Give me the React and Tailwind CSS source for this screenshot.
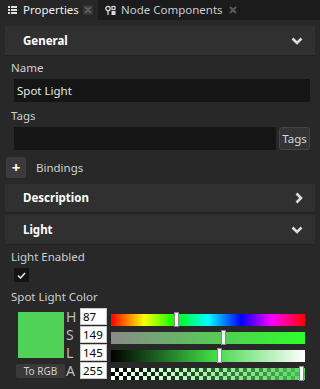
import React from 'react';

const font = { fontFamily: '"Noto Sans", "Open Sans", sans-serif' };

const ChevronDown = () => (
  <svg width="12" height="8" viewBox="0 0 12 8" className="text-[#dcdcdc]">
    <polyline points="1.5,1.5 6,6 10.5,1.5" fill="none" stroke="currentColor" strokeWidth="2.6" />
  </svg>
);

const ChevronRight = () => (
  <svg width="8" height="12" viewBox="0 0 8 12" className="text-[#dcdcdc]">
    <polyline points="1.5,1.5 6,6 1.5,10.5" fill="none" stroke="currentColor" strokeWidth="2.6" />
  </svg>
);

const Close = ({ boxed }) => (
  <span className={`flex items-center justify-center w-[10px] h-[10px] ${boxed ? 'bg-[#353535]' : ''}`}>
    <svg width="8" height="8" viewBox="0 0 8 8">
      <path d="M1 1 L7 7 M7 1 L1 7" stroke="#5c5c5c" strokeWidth="2" />
    </svg>
  </span>
);

const ListIcon = () => (
  <svg width="9" height="8" viewBox="0 0 9 8" fill="#e0e0e0">
    <rect x="0" y="0" width="2" height="2" />
    <rect x="3" y="0" width="6" height="2" />
    <rect x="0" y="3" width="2" height="2" />
    <rect x="3" y="3" width="6" height="2" />
    <rect x="0" y="6" width="2" height="2" />
    <rect x="3" y="6" width="6" height="2" />
  </svg>
);

const NodeIcon = () => (
  <svg width="11" height="11" viewBox="0 0 11 11" fill="none" stroke="#d8d8d8">
    <circle cx="3" cy="3.5" r="2.2" strokeWidth="1.3" />
    <line x1="3" y1="6" x2="3" y2="10" strokeWidth="1.3" />
    <rect x="7" y="1.5" width="3" height="3" strokeWidth="1.2" />
    <rect x="7" y="6.5" width="3" height="3" fill="#d8d8d8" strokeWidth="1" />
  </svg>
);

const Section = ({ title, open, className = '' }) => (
  <div className={`flex items-center justify-between bg-[#303030] border-b border-[#232323] pl-[18px] pr-[12px] ${className}`}>
    <span className="text-[11.5px] font-bold text-white">{title}</span>
    {open ? <ChevronDown /> : <ChevronRight />}
  </div>
);

const Label = ({ children, className = '' }) => (
  <div className={`pl-[6px] text-[11.5px] leading-[16px] text-[#cfcfcf] ${className}`}>{children}</div>
);

const rows = [
  { key: 'H', value: '87', handle: 63, bar: 'bg-[linear-gradient(to_right,#ff0000,#ffff00_17%,#00ff00_33%,#00ffff_50%,#0000ff_67%,#ff00ff_83%,#ff0000)]' },
  { key: 'S', value: '149', handle: 110, bar: 'bg-[linear-gradient(to_right,#8a8a8a,#2bff2b)]' },
  { key: 'L', value: '145', handle: 106, bar: 'bg-[linear-gradient(to_right,#000000,#3fd846_52%,#ffffff)]' },
  { key: 'A', value: '255', handle: 188, bar: 'checker' },
];

const Slider = ({ bar, handle }) => (
  <div className="relative mt-[6px] ml-[4px] w-[194px] h-[12px]">
    {bar === 'checker' ? (
      <div className="absolute inset-0 bg-[repeating-conic-gradient(#000_0_25%,#fff_0_50%)] bg-[length:8px_8px]">
        <div className="absolute inset-0 bg-[linear-gradient(to_right,rgba(79,209,88,0),rgba(79,209,88,0.92))]" />
      </div>
    ) : (
      <div className={`absolute inset-0 ${bar}`} />
    )}
    <div className="absolute top-[-2px] w-[5px] h-[15px] bg-white border border-[#8a8a8a]" style={{ left: handle }} />
  </div>
);

export default function App() {
  return (
    <div className="w-[320px] h-[389px] bg-[#282828] overflow-hidden" style={font}>
      {/* tabs */}
      <div className="flex h-[20px] bg-[#1b1b1b]">
        <div className="flex items-center w-[98px] bg-[#262626] pl-[8px]">
          <ListIcon />
          <span className="ml-[6px] text-[11.5px] text-[#f0f0f0]">Properties</span>
          <span className="ml-auto mr-[5px]"><Close boxed /></span>
        </div>
        <div className="flex items-center pl-[7px] w-[152px]">
          <NodeIcon />
          <span className="ml-[5px] text-[11.5px] text-[#c9cdd6]">Node Components</span>
          <span className="ml-auto mr-[12px]"><Close /></span>
        </div>
      </div>

      <div className="px-[5px]">
        <Section title="General" open className="mt-[6px] h-[30px]" />
        <Label className="mt-[4px]">Name</Label>
        <div className="ml-[9px] mr-[5px] mt-[3px] h-[23px] bg-[#151515] flex items-center pl-[3px] text-[11.5px] text-[#e6e6e6]">
          Spot Light
        </div>
        <Label className="mt-[6px]">Tags</Label>
        <div className="flex ml-[9px] mr-[5px] mt-[3px] h-[23px]">
          <div className="flex-1 bg-[#151515]" />
          <button className="ml-[3px] w-[31px] bg-[#333333] border border-[#444444] rounded-[3px] text-[11.5px] text-[#d6d6d6] flex items-center justify-center">
            Tags
          </button>
        </div>
        <div className="flex items-center mt-[7px] h-[21px] pl-[1px]">
          <div className="w-[20px] h-[21px] bg-[#3a3a3a] rounded-[2px] flex items-center justify-center text-white text-[15px] font-bold leading-none">
            +
          </div>
          <span className="ml-[10px] text-[11.5px] text-[#d0d0d0]">Bindings</span>
        </div>
        <Section title="Description" className="mt-[6px] h-[29px]" />
        <Section title="Light" open className="mt-[2px] h-[30px]" />
        <Label className="mt-[4px]">Light Enabled</Label>
        <div className="ml-[9px] mt-[3px] w-[15px] h-[14px] bg-[#141414] flex items-center justify-center">
          <svg width="9" height="7" viewBox="0 0 9 7">
            <polyline points="1,3.5 3.5,6 8,1" fill="none" stroke="#e6e6e6" strokeWidth="1.6" />
          </svg>
        </div>
        <Label className="mt-[7px]">Spot Light Color</Label>

        <div className="flex mt-[3px]">
          <div className="ml-[11px] w-[49px] flex flex-col">
            <div className="ml-[2px] mt-[4px] w-[46px] h-[46px] bg-[#50d158]" />
            <button className="mt-[6px] h-[14px] w-[49px] bg-[#3a3a3a] rounded-[2px] text-[10px] leading-[14px] text-[#cfcfcf]">
              To RGB
            </button>
          </div>
          <div className="flex flex-col ml-[1px]">
            {rows.map((r) => (
              <div key={r.key} className="flex h-[18px]">
                <span className="w-[14px] text-[14px] leading-[18px] text-[#bdbdbd]">{r.key}</span>
                <div className="w-[27px] h-[17px] bg-white border border-[#c8c8c8] text-[11.5px] leading-[15px] text-black pl-[2px]">
                  {r.value}
                </div>
                <Slider bar={r.bar} handle={r.handle} />
              </div>
            ))}
          </div>
        </div>
      </div>
    </div>
  );
}
